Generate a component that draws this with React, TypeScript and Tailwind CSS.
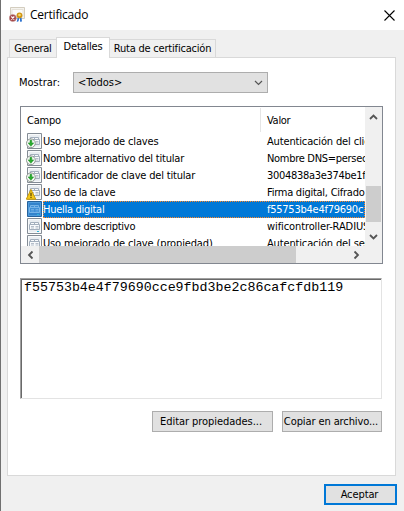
import { ReactNode } from "react";

type Kind = "ext" | "warn" | "prop" | "selected";

const rows: { name: string; value: string; kind: Kind; nameCls: string; valueCls: string }[] = [
  { name: "Uso mejorado de claves", value: "Autenticación del clien", kind: "ext", nameCls: "tracking-[-0.14px]", valueCls: "tracking-[-0.15px]" },
  { name: "Nombre alternativo del titular", value: "Nombre DNS=persec", kind: "ext", nameCls: "tracking-[-0.2px]", valueCls: "tracking-[-0.3px]" },
  { name: "Identificador de clave del titular", value: "3004838a3e374be1f", kind: "ext", nameCls: "tracking-[-0.18px]", valueCls: "tracking-[-0.3px]" },
  { name: "Uso de la clave", value: "Firma digital, Cifrado", kind: "warn", nameCls: "tracking-[-0.2px]", valueCls: "tracking-[-0.25px]" },
  { name: "Huella digital", value: "f55753b4e4f79690c", kind: "selected", nameCls: "tracking-[-0.28px]", valueCls: "tracking-[-0.25px]" },
  { name: "Nombre descriptivo", value: "wificontroller-RADIUS", kind: "prop", nameCls: "tracking-[-0.27px]", valueCls: "tracking-[-0.1px]" },
  { name: "Uso mejorado de clave (propiedad)", value: "Autenticación del serv", kind: "prop", nameCls: "tracking-[-0.14px]", valueCls: "tracking-[-0.15px]" },
];

function CertificateIcon() {
  return (
    <svg width="16" height="17" viewBox="0 0 16 17" className="shrink-0">
      <path d="M1.5.5h14v11h-14z" fill="#f5f3ee" stroke="#d3cdbf" />
      <path d="M3 2.5h11v7H3z" fill="#fbfbfa" stroke="#e6e2d9" />
      <path d="M8.7 10.5l-1 4.5 1.8-.8.8-3zM11 10.5v4.3l2-.4-.5-4z" fill="#2f74d0" />
      <circle cx="10.5" cy="8.3" r="2.9" fill="#cf9412" />
      <circle cx="10.5" cy="8" r="1.3" fill="#f8dc70" />
      <circle cx="3.8" cy="11" r="3.5" fill="#a34242" stroke="#c79a9a" strokeWidth=".6" />
      <path d="M2.3 9.5l3 3M5.3 9.5l-3 3" stroke="#fff" strokeWidth="1.2" />
    </svg>
  );
}

function FieldIcon({ kind }: { kind: Kind }) {
  const sel = kind === "selected";
  const inner = sel ? "#77b4e8" : "#a3afbd";
  return (
    <svg width="17" height="17" viewBox="0 0 17 17" className="shrink-0">
      <path d="M1.5.5h14v15h-14z" fill={sel ? "#3383cc" : "#e9edf1"} stroke={sel ? "#26629c" : "#848c95"} />
      <path d="M2.5 1.5h12v13h-12z" fill="none" stroke={sel ? "#4f9bdc" : "#f8fafb"} />
      <path d="M4.5 4.5h4v2h-4zM8.5 4.5h4v2h-4zM3.5 6.5h10v5h-10z" fill={sel ? "#3f8fd6" : "#f8fafc"} stroke={inner} />
      <path d="M5 8.5h3M9.5 8.5h3M5 10h3M9.5 10h3" stroke={inner} strokeWidth=".8" />
      {(kind === "prop" || sel) && <path d="M11 13.5h2" stroke="#27b6d8" />}
      {kind === "ext" && (
        <>
          <circle cx="4.9" cy="10.3" r="4.4" fill="#f7f9f7" stroke="#8f9792" />
          <path d="M4 7.3h1.8v2.6h1.9l-2.8 3.4-2.8-3.4H4z" fill="#2bad2f" stroke="#168b20" strokeWidth=".5" />
        </>
      )}
      {kind === "warn" && (
        <>
          <path d="M5 5.5l4.7 9.7H.3z" fill="#f5c91c" stroke="#c99b08" strokeLinejoin="round" />
          <path d="M5 8.7v3.2M5 12.8V14" stroke="#5b4400" strokeWidth="1.2" />
        </>
      )}
    </svg>
  );
}

function Chevron({ className, weight = 1.8 }: { className?: string; weight?: number }) {
  return (
    <svg width="9" height="6" viewBox="0 0 9 6" className={className}>
      <path d="M1 1l3.5 3.5L8 1" fill="none" stroke="#555" strokeWidth={weight} />
    </svg>
  );
}

function Button({ children, className }: { children: ReactNode; className: string }) {
  return (
    <button className={`flex h-[21px] items-center justify-center whitespace-nowrap bg-[#e1e1e1] ${className}`}>
      {children}
    </button>
  );
}

export default function App() {
  return (
    <div className="flex h-[511px] w-[404px] flex-col overflow-hidden border-l border-[#707070] bg-[#f0f0f0] text-[11px] leading-[17px] text-black [font-family:'DejaVu_Sans_Condensed','Noto_Sans',sans-serif]">
      <header className="flex h-[30px] shrink-0 items-center bg-white pl-2 pr-[9px]">
        <CertificateIcon />
        <h1 className="ml-[5px] flex-1 pb-px text-[12px] tracking-[-0.22px] [font-family:'Open_Sans',sans-serif]">Certificado</h1>
        <svg width="11" height="11" viewBox="0 0 11 11">
          <path d="M.5.5l10 10M10.5.5l-10 10" stroke="#000" strokeWidth="1.1" />
        </svg>
      </header>

      <nav className="z-10 -mb-px ml-2 mt-[7px] flex h-[21px] shrink-0 items-end whitespace-nowrap">
        <div className="mb-px flex h-[18px] w-[47px] items-center justify-center border border-b-0 border-r-0 border-[#d9d9d9] tracking-[-0.25px]">General</div>
        <div className="flex h-[21px] w-[54px] justify-center border border-b-0 border-[#d9d9d9] bg-white tracking-[-0.2px]">Detalles</div>
        <div className="mb-px flex h-[18px] w-[106px] items-center justify-center border border-b-0 border-l-0 border-[#d9d9d9] tracking-[-0.2px]">Ruta de certificación</div>
      </nav>

      <main className="ml-1.5 flex h-[419px] w-[389px] shrink-0 flex-col border border-[#d9d9d9] bg-white pl-3">
        <div className="mt-[14px] flex h-[21px] items-center">
          <label className="-ml-px w-[54px]">Mostrar:</label>
          <div className="flex h-[21px] w-[195px] items-center justify-between border border-[#adadad] bg-[#e1e1e1] pl-[4px] pr-[4px]">
            <span>&lt;Todos&gt;</span>
            <Chevron weight={1.2} />
          </div>
        </div>

        <section className="mt-[13px] flex h-[158px] w-[363px] flex-col border border-[#828790] bg-white">
          <div className="flex h-[139px]">
            <div className="flex w-[344px] flex-col overflow-hidden whitespace-nowrap">
              <div className="flex h-[26px] shrink-0 pt-px">
                <div className="h-[24px] w-[240px] border-r border-[#e5e5e5] pl-[6px] leading-[25px] tracking-[-0.2px]">Campo</div>
                <div className="pl-[6px] leading-[25px] tracking-[-0.3px]">Valor</div>
              </div>
              {rows.map((r) => (
                <div key={r.name} className="flex h-[17px] shrink-0 pl-[5px]">
                  <FieldIcon kind={r.kind} />
                  <div
                    className={
                      r.kind === "selected"
                        ? "flex flex-1 bg-[#0078d7] text-white outline-1 -outline-offset-1 outline-dotted outline-[#ff8728]"
                        : "flex flex-1"
                    }
                  >
                    <span className={`w-[224px] shrink-0 ${r.nameCls}`}>{r.name}</span>
                    <span className={`w-0 ${r.valueCls}`}>{r.value}</span>
                  </div>
                </div>
              ))}
            </div>
            <div className="flex w-[17px] flex-col items-center bg-[#f0f0f0] pt-[7px]">
              <Chevron className="rotate-180" />
              <div className="mt-[66px] h-[36px] w-[15px] shrink-0 bg-[#cdcdcd]" />
              <Chevron className="mt-[12px]" />
            </div>
          </div>
          <div className="flex h-[17px] items-center bg-[#f0f0f0] pl-[5px]">
            <Chevron className="rotate-90" />
            <div className="ml-[4px] h-[17px] w-[257px] bg-[#cdcdcd]" />
            <Chevron className="ml-[56px] -rotate-90" />
          </div>
        </section>

        <div className="mt-[14px] h-[121px] w-[362px] border-b border-l border-r border-t border-b-[#e3e3e3] border-l-[#a0a0a0] border-r-[#e3e3e3] border-t-[#a0a0a0]">
          <div className="h-full border-l border-t border-[#696969] pl-[2px] text-[13.3px] leading-[15px] [font-family:'Liberation_Mono',monospace]">
            f55753b4e4f79690cce9fbd3be2c86cafcfdb119
          </div>
        </div>

        <div className="mt-3 flex gap-[9px] pl-[132px]">
          <Button className="w-[121px] border border-[#adadad] pr-[3px] tracking-[-0.05px]">Editar propiedades...</Button>
          <Button className="w-[100px] border border-[#adadad] pr-[2px] tracking-[-0.1px]">Copiar en archivo...</Button>
        </div>
      </main>

      <footer className="mt-2 flex justify-end pr-[7px]">
        <Button className="w-[73px] border-2 border-[#0078d7] pr-[2px] tracking-[-0.1px]">Aceptar</Button>
      </footer>
    </div>
  );
}
